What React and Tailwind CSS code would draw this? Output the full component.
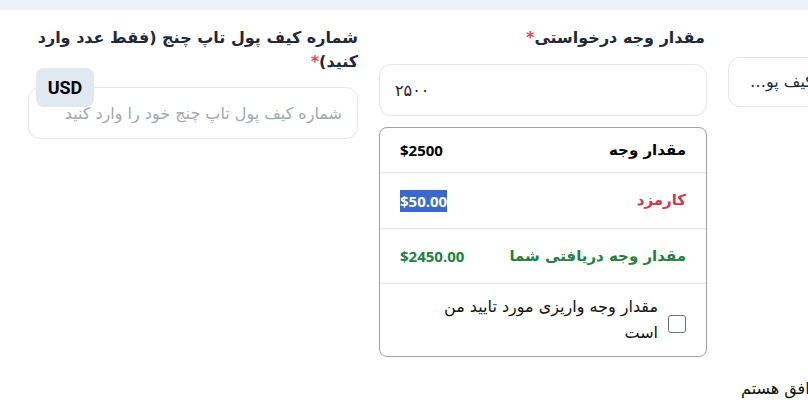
import { useState } from "react";

const fa = { fontFamily: '"DejaVu Sans", sans-serif' };
const latin = { fontFamily: '"Open Sans", "DejaVu Sans", sans-serif' };

export default function App() {
  const [confirmed, setConfirmed] = useState(false);
  const [amount, setAmount] = useState("۲۵۰۰");
  const [wallet, setWallet] = useState("");

  return (
    <div className="w-[808px] h-[410px] overflow-hidden bg-white" style={fa}>
      {/* top strip */}
      <div className="h-[10px] bg-[#eef2f8]" />

      <div className="flex gap-[21px] pl-[28px] pt-[16px]">
        {/* wallet number column */}
        <div dir="rtl" className="w-[330px] shrink-0">
          <label className="block text-[16px] leading-[24px] font-bold text-[#1f2937]">
            شماره کیف پول تاپ چنج (فقط عدد وارد
            <br />
            کنید)
            <span className="text-[#e0475b]">*</span>
          </label>
          <div className="relative mt-[13px]">
            <input
              value={wallet}
              onChange={(e) => setWallet(e.target.value)}
              placeholder="شماره کیف پول تاپ چنج خود را وارد کنید"
              className="w-full h-[52px] rounded-xl border border-[#e5e7eb] px-[15px] text-[16px] text-[#222] placeholder:text-[#a3a8b0] outline-none"
              style={fa}
            />
            <span
              className="absolute left-[8px] top-[-19px] w-[58px] h-[39px] rounded-lg bg-[#e2e8f0] flex items-start justify-center pt-[6px] text-[18px] font-bold text-black"
              style={{ fontFamily: "Roboto, sans-serif" }}
            >
              USD
            </span>
          </div>
        </div>

        {/* amount column */}
        <div dir="rtl" className="w-[328px] shrink-0">
          <label className="block text-[16px] leading-[24px] font-bold text-[#1f2937] pr-[2px]">
            مقدار وجه درخواستی
            <span className="text-[#e0475b]">*</span>
          </label>
          <input
            value={amount}
            onChange={(e) => setAmount(e.target.value)}
            dir="ltr"
            className="mt-[14px] w-full h-[52px] rounded-xl border border-[#e5e7eb] px-[15px] text-[16px] text-[#222] outline-none"
            style={fa}
          />

          <div className="mt-[11px] rounded-lg border border-[#a3a3a3]">
            <div className="h-[45px] flex items-center justify-between px-[20px] border-b border-[#e5e7eb]">
              <span className="text-[15px] font-bold text-black">مقدار وجه</span>
              <span className="text-[15px] font-bold text-black" style={latin}>$2500</span>
            </div>
            <div className="h-[56px] flex items-center justify-between px-[20px] border-b border-[#e5e7eb]">
              <span className="text-[15px] font-bold text-[#d9344a]">کارمزد</span>
              <span className="text-[15px] font-bold text-white bg-[#3a68cf] leading-[22px]" style={latin}>$50.00</span>
            </div>
            <div className="h-[55px] flex items-center justify-between px-[20px] border-b border-[#e5e7eb]">
              <span className="text-[15px] font-bold text-[#24803f]">مقدار وجه دریافتی شما</span>
              <span className="text-[15px] font-bold text-[#24803f]" style={latin}>$2450.00</span>
            </div>
            <label className="h-[72px] flex items-center gap-[10px] pr-[20px] cursor-pointer">
              <input
                type="checkbox"
                checked={confirmed}
                onChange={(e) => setConfirmed(e.target.checked)}
                className="appearance-none w-[18px] h-[18px] shrink-0 rounded-[3px] border border-[#6b7280] bg-white mt-[8px] checked:bg-[#3a68cf]"
              />
              <span className="w-[240px] text-[16px] leading-[26px] text-[#111]">
                مقدار وجه واریزی مورد تایید من است
              </span>
            </label>
          </div>
        </div>

        {/* wallet type column (cut off by the window) */}
        <div dir="rtl" className="w-[330px] shrink-0">
          <div className="h-[24px]" />
          <div className="mt-[7px] h-[50px] rounded-xl border border-[#e5e7eb] px-[16px] flex items-center">
            <span className="truncate text-[16px] font-medium text-[#1f2937]">
              لطفا یک نوع شبکه و آدرس انتقال کیف پول مقصد را انتخاب کنید
            </span>
          </div>
          <div className="mt-[270px] pl-[13px] text-left text-[16px] leading-[24px] text-[#111]">
            <span dir="rtl">موافق هستم</span>
          </div>
        </div>
      </div>
    </div>
  );
}
